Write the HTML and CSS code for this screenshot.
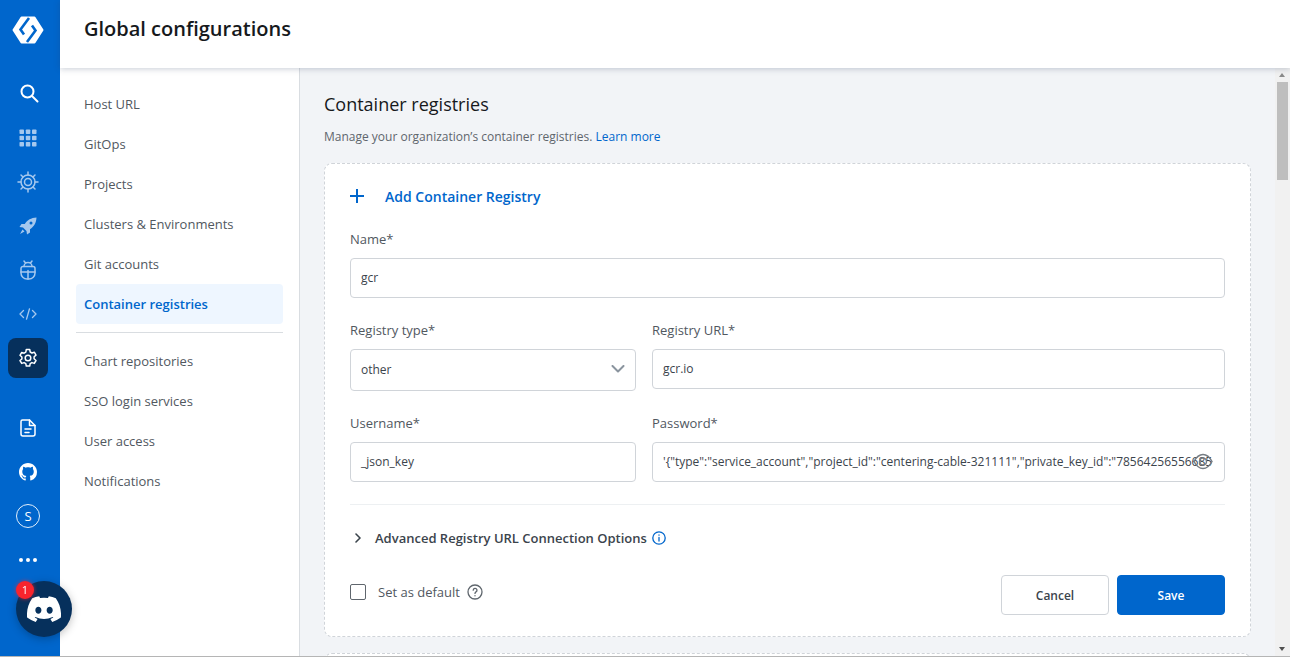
FILE: index.html
```html
<!DOCTYPE html>
<html lang="en">
<head>
<meta charset="UTF-8">
<meta name="viewport" content="width=device-width, initial-scale=1.0">
<title>Global configurations</title>
<link rel="stylesheet" href="styles.css">
</head>
<body>
    <aside class="rail">
        <a class="rail-logo">
            <svg width="32" height="30" viewBox="0 0 32 30">
                <path fill="#fff" stroke="#fff" stroke-width="2" stroke-linejoin="round" d="M9.500 2.500H22.500L30.500 15L22.500 27.500H9.500L1.500 15Z"/>
                <path fill="none" stroke="#0066cc" stroke-width="2.600" d="M17 3L8.500 14.500L12 19.500M15 27L23.500 15.500L20 10.500"/>
            </svg>
        </a>
        <div class="rail-item rail-search">
            <svg width="20" height="20" viewBox="0 0 20 20" fill="none" stroke="#fff" stroke-width="2" stroke-linecap="round"><circle cx="8.500" cy="8.500" r="6"/><path d="M13 13l5.500 5.500"/></svg>
        </div>
        <div class="rail-item">
            <svg width="18" height="18" viewBox="0 0 18 18" fill="#a5c8ee"><rect x="0.500" y="0.500" width="4.500" height="4.500" rx="0.800"/><rect x="6.800" y="0.500" width="4.500" height="4.500" rx="0.800"/><rect x="13" y="0.500" width="4.500" height="4.500" rx="0.800"/><rect x="0.500" y="6.800" width="4.500" height="4.500" rx="0.800"/><rect x="6.800" y="6.800" width="4.500" height="4.500" rx="0.800"/><rect x="13" y="6.800" width="4.500" height="4.500" rx="0.800"/><rect x="0.500" y="13" width="4.500" height="4.500" rx="0.800"/><rect x="6.800" y="13" width="4.500" height="4.500" rx="0.800"/><rect x="13" y="13" width="4.500" height="4.500" rx="0.800"/></svg>
        </div>
        <div class="rail-item">
            <svg width="22" height="22" viewBox="0 0 22 22" fill="none" stroke="#a5c8ee" stroke-width="1.500"><circle cx="11" cy="11" r="7"/><circle cx="11" cy="11" r="3.500"/><path d="M11 1v3M11 18v3M1 11h3M18 11h3M4 4l2 2M16 16l2 2M18 4l-2 2M6 16l-2 2" stroke-linecap="round"/></svg>
        </div>
        <div class="rail-item">
            <svg width="18" height="18" viewBox="0 0 18 18" fill="#a5c8ee"><path d="M17.500 0.500C12 0.800 8.500 3 5.800 7H2.500L0.500 10L4 10.500L7.500 14L8 17.500L11 15.500V12.200C15 9.500 17.200 6 17.500 0.500ZM12 4.500a1.500 1.500 0 1 1 0 3a1.500 1.500 0 0 1 0-3ZM3.500 12.500L1 17L5.500 14.500Z"/></svg>
        </div>
        <div class="rail-item">
            <svg width="18" height="20" viewBox="0 0 18 20" fill="none" stroke="#a5c8ee" stroke-width="1.500" stroke-linecap="round"><path d="M4 6.500h10a2 2 0 0 1 2 2V13a6 6 0 0 1-6 6H8a6 6 0 0 1-6-6V8.500a2 2 0 0 1 2-2Z"/><path d="M5 6.500a4 4 0 0 1 8 0M2 12h14M9 10.500V19M5 1l1.500 2M13 1l-1.500 2"/></svg>
        </div>
        <div class="rail-item">
            <svg width="18" height="12" viewBox="0 0 18 12" fill="none" stroke="#a5c8ee" stroke-width="1.300" stroke-linecap="round" stroke-linejoin="round"><path d="M4.500 2.500L1 6l3.500 3.500M13.500 2.500L17 6l-3.500 3.500M10.500 0.800L7.500 11.200"/></svg>
        </div>
        <div class="rail-active">
            <svg width="20" height="20" viewBox="0 0 20 20" fill="none" stroke="#fff" stroke-width="1.500" stroke-linejoin="round"><path d="M8.300 1.500h3.400l.5 2.500 1.700 1 2.400-.8 1.700 2.900-1.900 1.700v2l1.900 1.700-1.700 2.900-2.400-.8-1.700 1-.5 2.500H8.300l-.5-2.500-1.700-1-2.400.8-1.700-2.900L3.900 11V9L2 7.300l1.700-2.900 2.400.8 1.700-1Z"/><circle cx="10" cy="10" r="2.800"/></svg>
        </div>
        <div class="rail-item rail-doc">
            <svg width="16" height="18" viewBox="0 0 16 18" fill="none" stroke="#fff" stroke-width="1.500" stroke-linecap="round" stroke-linejoin="round"><path d="M2.500 1h7L15 6.500V15a2 2 0 0 1-2 2H3a2 2 0 0 1-2-2V2.500A1.500 1.500 0 0 1 2.500 1Z"/><path d="M9.500 1v5.500H15M5 10h6M5 13.500h4"/></svg>
        </div>
        <div class="rail-item">
            <svg width="18" height="18" viewBox="0 0 16 16" fill="#fff"><path d="M8 0C3.580 0 0 3.580 0 8c0 3.540 2.290 6.530 5.470 7.590.4.070.55-.17.55-.38 0-.19-.01-.82-.01-1.490-2.010.37-2.530-.49-2.690-.94-.09-.23-.48-.94-.82-1.130-.28-.15-.68-.52-.01-.53.63-.01 1.080.58 1.230.82.720 1.210 1.870.870 2.330.660.070-.520.280-.870.510-1.070-1.780-.2-3.640-.890-3.640-3.950 0-.870.310-1.590.820-2.150-.08-.2-.36-1.020.08-2.120 0 0 .67-.210 2.200.820.640-.18 1.320-.270 2-.270s1.360.090 2 .270c1.530-1.040 2.200-.820 2.200-.820.440 1.100.160 1.920.080 2.120.510.560.820 1.270.820 2.150 0 3.070-1.870 3.750-3.650 3.950.290.250.540.730.540 1.480 0 1.070-.010 1.930-.010 2.200 0 .210.150.460.550.380A8.013 8.013 0 0 0 16 8c0-4.420-3.580-8-8-8z"/></svg>
        </div>
        <div class="rail-item">
            <span class="rail-avatar">S</span>
        </div>
        <div class="rail-item rail-more">
            <i></i><i></i><i></i>
        </div>
    </aside>

    <div class="main">
        <header class="topbar">
            <h1>Global configurations</h1>
        </header>
        <div class="body-row">
            <nav class="side-nav">
                <a>Host URL</a>
                <a>GitOps</a>
                <a>Projects</a>
                <a>Clusters &amp; Environments</a>
                <a>Git accounts</a>
                <a class="active">Container registries</a>
                <hr>
                <a>Chart repositories</a>
                <a>SSO login services</a>
                <a>User access</a>
                <a>Notifications</a>
            </nav>
            <main class="content">
                <h2>Container registries</h2>
                <p class="subtitle">Manage your organization’s container registries. <a>Learn more</a></p>
                <section class="card">
                    <div class="card-head">
                        <svg width="14" height="14" viewBox="0 0 14 14" fill="none" stroke="#0066cc" stroke-width="2"><path d="M7 0v14M0 7h14"/></svg>
                        <span>Add Container Registry</span>
                    </div>
                    <div class="field field-name">
                        <label>Name*</label>
                        <div class="input">gcr</div>
                    </div>
                    <div class="form-row">
                        <div class="field">
                            <label>Registry type*</label>
                            <div class="input select">other
                                <svg width="14" height="8" viewBox="0 0 14 8" fill="none" stroke="#8a949e" stroke-width="2" stroke-linecap="round" stroke-linejoin="round"><path d="M1.500 1l5.500 5.500L12.500 1"/></svg>
                            </div>
                        </div>
                        <div class="field">
                            <label>Registry URL*</label>
                            <div class="input">gcr.io</div>
                        </div>
                    </div>
                    <div class="form-row form-row-2">
                        <div class="field">
                            <label>Username*</label>
                            <div class="input">_json_key</div>
                        </div>
                        <div class="field">
                            <label>Password*</label>
                            <div class="input password">
                                <span>'{"type":"service_account","project_id":"centering-cable-321111","private_key_id":"78564256556685</span>
                                <svg class="eye" width="20" height="17" viewBox="0 0 20 17" fill="none" stroke="#767d84" stroke-width="1.500"><path d="M1 8.500C3.500 3.800 6.500 1.500 10 1.500s6.500 2.300 9 7c-2.500 4.700-5.500 7-9 7s-6.500-2.300-9-7Z"/><circle cx="10" cy="8.500" r="3.500"/></svg>
                            </div>
                        </div>
                    </div>
                    <div class="advanced">
                        <svg width="8" height="10" viewBox="0 0 8 10" fill="none" stroke="#3b444c" stroke-width="1.600" stroke-linecap="round" stroke-linejoin="round"><path d="M2 1l4 4-4 4"/></svg>
                        <span>Advanced Registry URL Connection Options</span>
                        <svg width="14" height="14" viewBox="0 0 14 14" fill="none" stroke="#0066cc" stroke-width="1.300" stroke-linecap="round"><circle cx="7" cy="7" r="6.200"/><path d="M7 6.500v3.500M7 4v.2"/></svg>
                    </div>
                    <div class="card-foot">
                        <div class="default-check">
                            <span class="checkbox"></span>
                            <span>Set as default</span>
                            <svg width="16" height="16" viewBox="0 0 16 16" fill="none" stroke="#5f666d" stroke-width="1.300" stroke-linecap="round"><circle cx="8" cy="8" r="7"/><path d="M6.200 6.200a1.900 1.900 0 1 1 2.800 1.700c-.7.400-1 .8-1 1.500M8 11.600v.2"/></svg>
                        </div>
                        <div class="buttons">
                            <button class="btn">Cancel</button>
                            <button class="btn btn-primary">Save</button>
                        </div>
                    </div>
                </section>
                <div class="card-next"></div>
            </main>
            <div class="scrollbar">
                <span class="arrow-up"></span>
                <span class="thumb"></span>
                <span class="arrow-down"></span>
            </div>
        </div>
    </div>

    <div class="discord">
        <svg width="34" height="26" viewBox="0 0 127 96" fill="#fff"><path d="M107.700 8.100A105 105 0 0 0 81.500 0a72 72 0 0 0-3.400 6.800 97.700 97.700 0 0 0-29.100 0A72 72 0 0 0 45.600 0a105.900 105.900 0 0 0-26.300 8.100C2.700 32.700-1.800 56.600.400 80.200a105.700 105.700 0 0 0 32.200 16.200 78 78 0 0 0 6.900-11.200 68.400 68.400 0 0 1-10.800-5.200c.9-.7 1.800-1.400 2.700-2.100a75.600 75.600 0 0 0 64.300 0c.9.700 1.800 1.500 2.700 2.100a68.700 68.700 0 0 1-10.900 5.200 77 77 0 0 0 6.900 11.200 105.300 105.300 0 0 0 32.200-16.200c2.600-27.400-4.500-51.100-18.900-72.100ZM42.500 65.700c-6.300 0-11.400-5.700-11.400-12.800s5-12.900 11.400-12.900 11.500 5.800 11.400 12.900c0 7-5 12.800-11.400 12.800Zm42.200 0c-6.300 0-11.400-5.700-11.400-12.800s5-12.900 11.400-12.900 11.500 5.800 11.400 12.900c0 7-5 12.800-11.400 12.800Z"/></svg>
        <span class="discord-badge">1</span>
    </div>
</body>
</html>
```
FILE: styles.css
```css
* {
    box-sizing: border-box;
}
html, body {
    height: 100%;
}
body {
    margin: 0;
    display: flex;
    overflow: hidden;
    font-family: "Open Sans", Arial, sans-serif;
    font-size: 13px;
    color: #3b444c;
    background: #fff;
    border-bottom: 1px solid #b5b5b5;
}

/* left rail */
.rail {
    width: 60px;
    flex-shrink: 0;
    background: #0066cc;
    display: flex;
    flex-direction: column;
    align-items: center;
}
.rail-logo {
    height: 60px;
    display: flex;
    align-items: center;
    justify-content: center;
    margin-left: -4px;
    margin-bottom: 13px;
}
.rail-item {
    width: 40px;
    height: 44px;
    display: flex;
    align-items: center;
    justify-content: center;
    margin-left: -4px;
}
.rail-search {
    height: 40px;
    margin-left: -2px;
    margin-bottom: 3px;
}
.rail-active {
    width: 40px;
    height: 40px;
    margin: 2px 0 0 -4px;
    background: #06305c;
    border-radius: 8px;
    display: flex;
    align-items: center;
    justify-content: center;
}
.rail-doc {
    margin-top: 28px;
}
.rail-avatar {
    width: 24px;
    height: 24px;
    border: 1.500px solid #e3effb;
    border-radius: 50%;
    color: #fff;
    font-size: 13px;
    display: flex;
    align-items: center;
    justify-content: center;
}
.rail-more {
    gap: 2.500px;
}
.rail-more i {
    width: 4.500px;
    height: 4.500px;
    border-radius: 50%;
    background: #fff;
}

/* top */
.main {
    flex: 1;
    min-width: 0;
    display: flex;
    flex-direction: column;
}
.topbar {
    height: 68px;
    flex-shrink: 0;
    padding-left: 24px;
    background: #fff;
    box-shadow: 0 1px 6px rgba(40, 60, 90, 0.25);
    position: relative;
    z-index: 2;
}
.topbar h1 {
    margin: 0;
    font-size: 20px;
    font-weight: 600;
    line-height: 57px;
    color: #16191c;
}
.body-row {
    flex: 1;
    min-height: 0;
    display: flex;
}

/* settings nav */
.side-nav {
    width: 240px;
    flex-shrink: 0;
    padding: 16px 16px 0;
    background: #fff;
    border-right: 1px solid #d9dde1;
}
.side-nav a {
    display: block;
    height: 40px;
    line-height: 40px;
    padding-left: 8px;
    border-radius: 4px;
    color: #51585f;
}
.side-nav a.active {
    background: #eef6ff;
    color: #0066cc;
    font-weight: 600;
}
.side-nav hr {
    margin: 8px 0 8px;
    border: 0;
    border-top: 1px solid #d9dde1;
}

/* content */
.content {
    flex: 1;
    min-width: 0;
    overflow: hidden;
    padding: 24px 24px 0;
    background: #f2f4f7;
}
.content h2 {
    margin: 0;
    font-size: 18px;
    font-weight: 400;
    line-height: 24px;
    color: #16191c;
}
.subtitle {
    margin: 11px 0 0;
    font-size: 12px;
    line-height: 20px;
    color: #5f666d;
}
.subtitle a {
    color: #0066cc;
}
.card {
    height: 474px;
    margin-top: 16px;
    padding: 0 25px;
    background: #fff;
    border: 1px dashed #d0d4d9;
    border-radius: 8px;
}
.card-head {
    display: flex;
    align-items: center;
    gap: 21px;
    height: 64px;
    font-size: 14px;
    font-weight: 600;
    color: #0066cc;
}
.field label {
    display: block;
    line-height: 20px;
    margin-bottom: 9px;
    color: #51585f;
}
.field-name {
    margin-top: 1px;
}
.input {
    height: 40px;
    padding: 0 10px 2px;
    display: flex;
    align-items: center;
    background: #fff;
    border: 1px solid #d0d4d9;
    border-radius: 4px;
    font-size: 12px;
    color: #3b444c;
}
.form-row {
    display: grid;
    grid-template-columns: 286px 573px;
    gap: 16px;
    margin-top: 22px;
}
.form-row-2 {
    margin-top: 22px;
}
.select {
    height: 42px;
    justify-content: space-between;
}
.password {
    position: relative;
}
.password span {
    white-space: nowrap;
}
.eye {
    position: absolute;
    right: 11px;
    top: 10px;
}
.advanced {
    display: flex;
    align-items: center;
    height: 67px;
    margin-top: 22px;
    padding-left: 4px;
    border-top: 1px solid #edf0f2;
    font-weight: 600;
    color: #3b444c;
}
.advanced span {
    margin: 0 5px 0 13px;
}
.card-foot {
    display: flex;
    justify-content: space-between;
    margin-top: 4px;
}
.default-check {
    display: flex;
    align-items: center;
    height: 34px;
    color: #51585f;
}
.checkbox {
    width: 16px;
    height: 16px;
    margin-right: 12px;
    border: 1px solid #5f666d;
    border-radius: 2px;
}
.default-check svg {
    margin-left: 7px;
}
.buttons {
    display: flex;
    gap: 8px;
}
.btn {
    width: 108px;
    height: 40px;
    background: #fff;
    border: 1px solid #d0d4d9;
    border-radius: 4px;
    font-family: inherit;
    font-size: 12px;
    font-weight: 600;
    color: #3b444c;
}
.btn-primary {
    background: #0066cc;
    border-color: #0066cc;
    color: #fff;
}
.card-next {
    height: 60px;
    margin-top: 16px;
    background: #fff;
    border: 1px dashed #d0d4d9;
    border-radius: 8px;
}

/* scrollbar */
.scrollbar {
    width: 15px;
    flex-shrink: 0;
    background: #f1f1f1;
    display: flex;
    flex-direction: column;
    align-items: center;
    position: relative;
}
.thumb {
    width: 11px;
    height: 98px;
    margin-top: 14px;
    background: #bebebe;
}
.arrow-up, .arrow-down {
    position: absolute;
    left: 4px;
    width: 0;
    height: 0;
    border-left: 3.500px solid transparent;
    border-right: 3.500px solid transparent;
}
.arrow-up {
    top: 5px;
    border-bottom: 4px solid #8a8a8a;
}
.arrow-down {
    bottom: 5px;
    border-top: 4px solid #505050;
}

/* discord */
.discord {
    position: fixed;
    left: 16px;
    top: 581px;
    width: 56px;
    height: 56px;
    border-radius: 50%;
    background: #06305c;
    box-shadow: 0 2px 8px rgba(0, 0, 0, 0.25);
    display: flex;
    align-items: center;
    justify-content: center;
    z-index: 5;
}
.discord-badge {
    position: absolute;
    left: 0;
    top: 0;
    width: 18px;
    height: 18px;
    border-radius: 50%;
    background: #f8242d;
    box-shadow: 0 0 4px rgba(248, 36, 45, 0.7);
    color: #fff;
    font-size: 11px;
    line-height: 18px;
    text-align: center;
}
```
